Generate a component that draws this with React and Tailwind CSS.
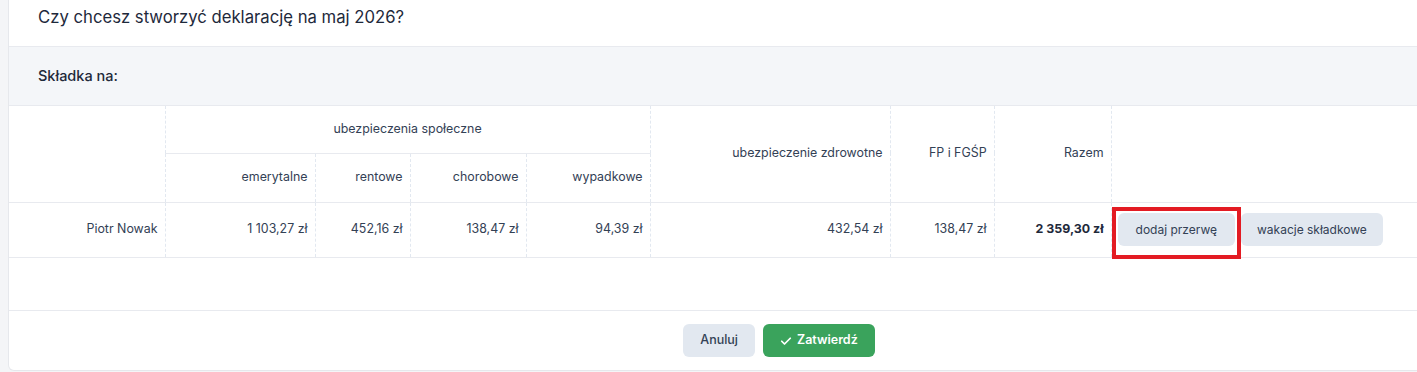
import React from "react";

const vline = "border-l border-l-[#e2e8f0] [border-left-style:dashed]";
const hline = "border-b border-b-[#e8eaef]";

export default function App() {
  return (
    <div
      className="w-[1417px] h-[372px] overflow-hidden bg-[#f4f5f7] pl-2"
      style={{ fontFamily: "Inter, 'Noto Sans', sans-serif" }}
    >
      <div className="w-[1542px] bg-white border-l border-b border-r border-[#e6e8ec] rounded-b-md h-[371px] flex flex-col text-[#334155]">
        <div className="h-[47px] pt-[5px] pl-[29px] text-[16.7px] leading-6 text-[#1e293b] border-b border-[#e8eaef]">
          Czy chcesz stworzyć deklarację na maj 2026?
        </div>
        <div className="h-[59px] bg-[#f4f6f9] border-b border-[#e8eaef] flex items-center pl-[29px] text-[14.5px] font-medium text-[#1e293b]">
          Składka na:
        </div>
        <table className="table-fixed w-full border-collapse text-[12.4px] text-[#334155]">
          <colgroup>
            <col className="w-[156px]" />
            <col className="w-[150px]" />
            <col className="w-[95px]" />
            <col className="w-[116px]" />
            <col className="w-[124px]" />
            <col className="w-[240px]" />
            <col className="w-[104px]" />
            <col className="w-[117px]" />
            <col />
          </colgroup>
          <thead>
            <tr className="h-[47px]">
              <th rowSpan={2} className={`${hline} font-normal`}></th>
              <th colSpan={4} className={`${vline} ${hline} font-normal text-center align-middle`}>
                ubezpieczenia społeczne
              </th>
              <th rowSpan={2} className={`${vline} ${hline} font-normal text-right pr-[7px] align-middle`}>
                ubezpieczenie zdrowotne
              </th>
              <th rowSpan={2} className={`${vline} ${hline} font-normal text-right pr-[7px] align-middle`}>
                FP i FGŚP
              </th>
              <th rowSpan={2} className={`${vline} ${hline} font-normal text-right pr-[7px] align-middle`}>
                Razem
              </th>
              <th rowSpan={2} className={`${vline} ${hline} font-normal`}></th>
            </tr>
            <tr className="h-[49px]">
              <th className={`${vline} ${hline} font-normal text-right pr-[7px]`}>emerytalne</th>
              <th className={`${vline} ${hline} font-normal text-right pr-[7px]`}>rentowe</th>
              <th className={`${vline} ${hline} font-normal text-right pr-[7px]`}>chorobowe</th>
              <th className={`${vline} ${hline} font-normal text-right pr-[7px]`}>wypadkowe</th>
            </tr>
          </thead>
          <tbody>
            <tr className="h-[55px]">
              <td className={`${hline} text-right pr-[7px]`}>Piotr Nowak</td>
              <td className={`${vline} ${hline} text-right pr-[7px]`}>1 103,27 zł</td>
              <td className={`${vline} ${hline} text-right pr-[7px]`}>452,16 zł</td>
              <td className={`${vline} ${hline} text-right pr-[7px]`}>138,47 zł</td>
              <td className={`${vline} ${hline} text-right pr-[7px]`}>94,39 zł</td>
              <td className={`${vline} ${hline} text-right pr-[7px]`}>432,54 zł</td>
              <td className={`${vline} ${hline} text-right pr-[7px]`}>138,47 zł</td>
              <td className={`${vline} ${hline} text-right pr-[7px] font-bold text-[#1e293b]`}>2 359,30 zł</td>
              <td className={`${vline} ${hline} pl-[6px]`}>
                <div className="flex items-center gap-[6px]">
                  <span className="relative">
                    <button className="h-[33px] px-[18px] rounded-md bg-[#e2e8f0] text-[12px] text-[#334155]">
                      dodaj przerwę
                    </button>
                    <span className="absolute left-[-6px] top-[-6px] right-[-6px] bottom-[-13px] border-4 border-[#e31b23] pointer-events-none z-10"></span>
                  </span>
                  <button className="h-[33px] px-[16px] rounded-md bg-[#e2e8f0] text-[12px] text-[#334155]">
                    wakacje składkowe
                  </button>
                </div>
              </td>
            </tr>
          </tbody>
        </table>
        <div className="flex-1 border-b border-[#e8eaef]"></div>
        <div className="h-[59px] flex items-center justify-center gap-2">
          <button className="h-[33px] px-[17px] rounded-md bg-[#e2e8f0] text-[12.5px] font-medium text-[#334155]">
            Anuluj
          </button>
          <button className="h-[33px] px-[17px] rounded-md bg-[#3aa35c] text-[12.5px] font-semibold text-white flex items-center gap-[5px]">
            <svg width="12" height="12" viewBox="0 0 24 24" fill="none" stroke="currentColor" strokeWidth="3.5" strokeLinecap="round" strokeLinejoin="round">
              <path d="M3.5 12.5l5.5 5.5L20.5 6.5" />
            </svg>
            Zatwierdź
          </button>
        </div>
      </div>
    </div>
  );
}
